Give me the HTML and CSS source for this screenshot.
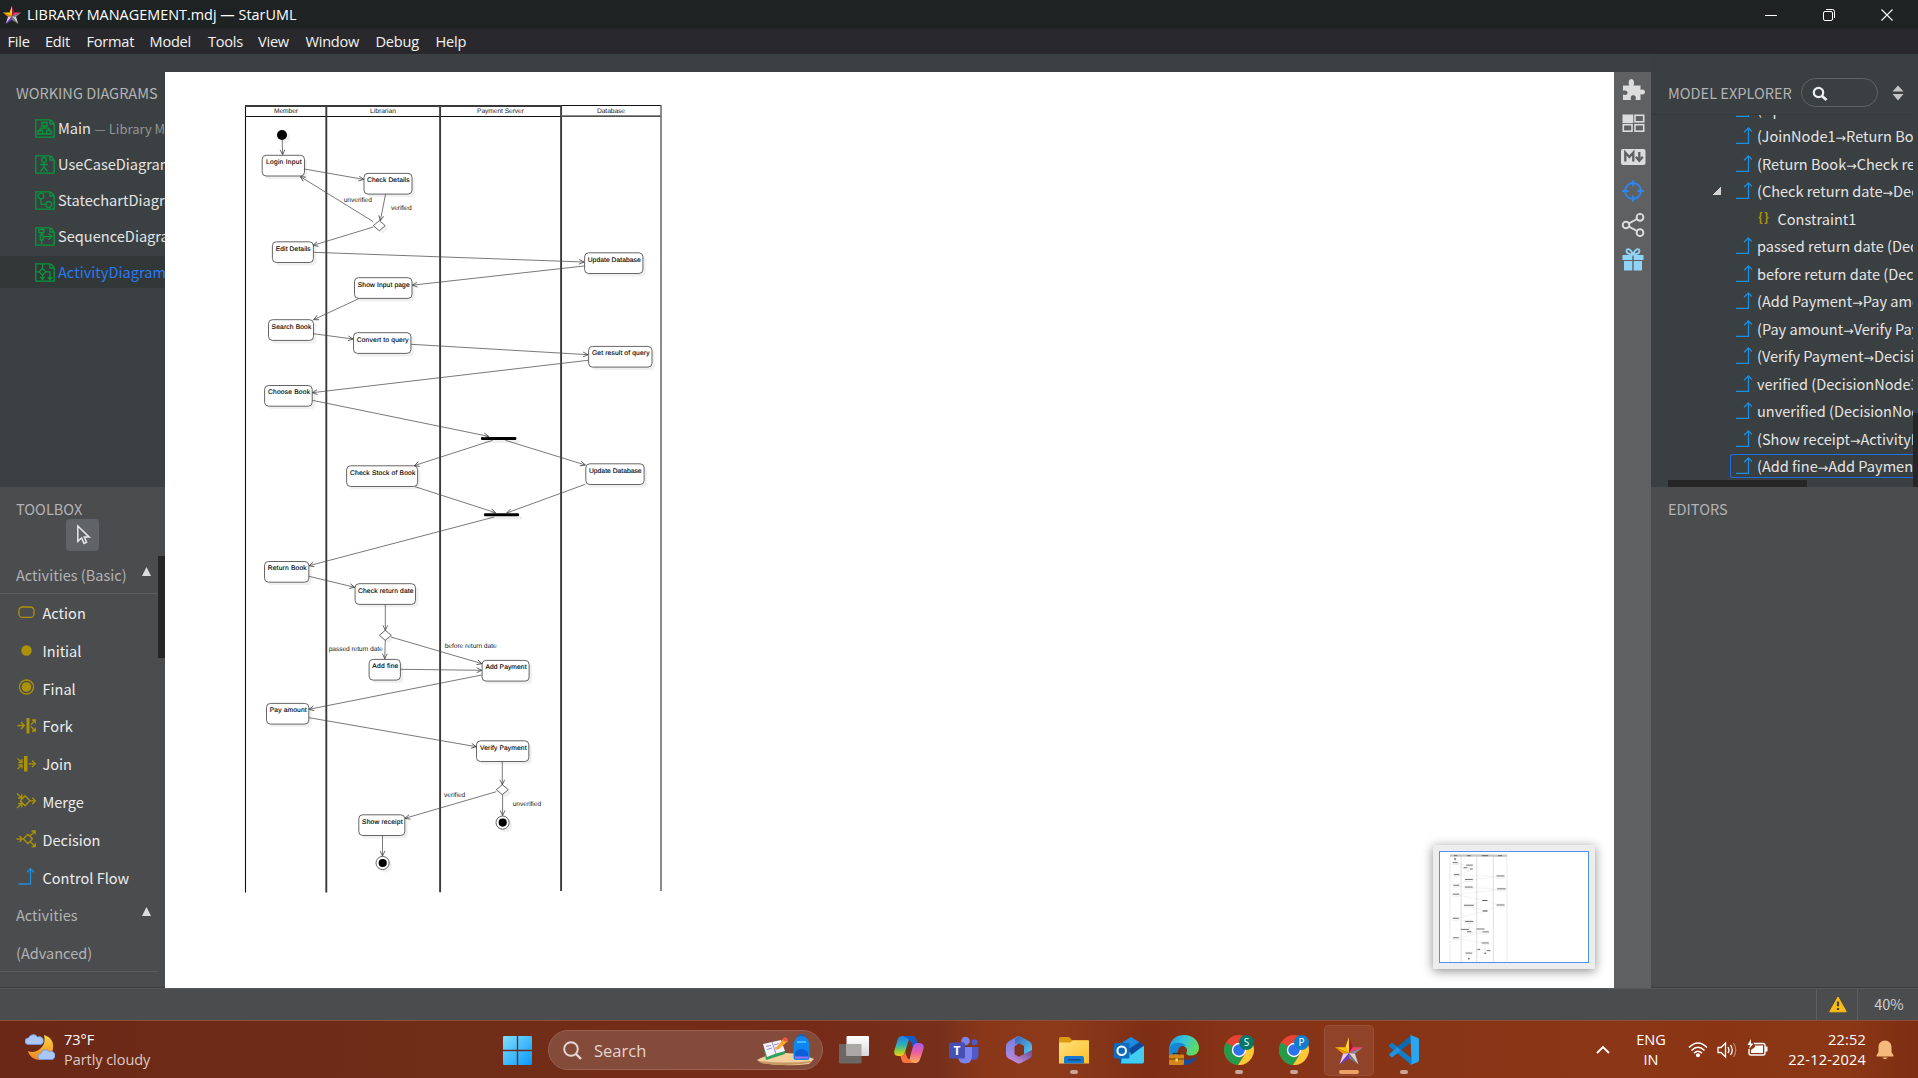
FILE: index.html
```html
<!DOCTYPE html>
<html lang="en">
<head>
<meta charset="utf-8">
<title>LIBRARY MANAGEMENT.mdj — StarUML</title>
<link rel="stylesheet" href="styles.css">
</head>
<body>
<svg class="defs" width="0" height="0" aria-hidden="true">
  <defs>
    <linearGradient id="gWin" x1="0" y1="0" x2="1" y2="1"><stop offset="0" stop-color="#7fe0ff"/><stop offset="1" stop-color="#0a97f8"/></linearGradient>
    <linearGradient id="gFolder" x1="0" y1="0" x2="1" y2="1"><stop offset="0" stop-color="#ffe07c"/><stop offset="1" stop-color="#fbc02c"/></linearGradient>
    <linearGradient id="gCopA" x1="0" y1="0" x2="0" y2="1"><stop offset="0" stop-color="#1d7fe8"/><stop offset=".45" stop-color="#2fb0b8"/><stop offset=".75" stop-color="#8fcf3c"/><stop offset="1" stop-color="#ffc814"/></linearGradient>
    <linearGradient id="gCopB" x1="0" y1="0" x2="0" y2="1"><stop offset="0" stop-color="#a65bf0"/><stop offset=".5" stop-color="#f0609a"/><stop offset="1" stop-color="#ffb054"/></linearGradient>
    <linearGradient id="gEdge" x1="0" y1="0" x2="1" y2=".4"><stop offset="0" stop-color="#1c93dc"/><stop offset=".5" stop-color="#35c4dc"/><stop offset="1" stop-color="#62dc58"/></linearGradient>
    <linearGradient id="gMoon" x1="0" y1="0" x2="0" y2="1"><stop offset="0" stop-color="#fad648"/><stop offset="1" stop-color="#f1841f"/></linearGradient>
    <linearGradient id="gTask" x1="0" y1="0" x2="0" y2="1"><stop offset="0" stop-color="#fff"/><stop offset="1" stop-color="#d8d8d8"/></linearGradient>
    <linearGradient id="gHexL" x1="0" y1="0" x2="0" y2="1"><stop offset="0" stop-color="#6f7fe0"/><stop offset="1" stop-color="#b58be6"/></linearGradient>
    <linearGradient id="gHexR" x1="0" y1="0" x2="1" y2="1"><stop offset="0" stop-color="#3a62b8"/><stop offset="1" stop-color="#55d0f0"/></linearGradient>
    <linearGradient id="gHexB" x1="0" y1="1" x2="1" y2="0"><stop offset="0" stop-color="#d79cf0"/><stop offset="1" stop-color="#6a4b8e"/></linearGradient>
    <marker id="arrow" viewBox="0 0 6 6" refX="5.6" refY="3" markerWidth="6" markerHeight="6" markerUnits="userSpaceOnUse" orient="auto"><path d="M0.6 .6L5.6 3L.6 5.4" fill="none" stroke="#444" stroke-width=".8"/></marker>
    <symbol id="star" viewBox="0 0 30 30">
      <path d="M15 1L11.3 11.3L15 17Z" fill="#ffd21f"/><path d="M15 1L18.7 11.3L15 17Z" fill="#a8123e"/>
      <path d="M11.3 11.3H1L15 17Z" fill="#ffc60e"/><path d="M1 11.3L9 17.8L15 17Z" fill="#e89a00"/>
      <path d="M18.7 11.3H29L15 17Z" fill="#ee4070"/><path d="M29 11.3L21 17.8L15 17Z" fill="#8b8b8f"/>
      <path d="M9 17.8L5.6 28.5L15 17Z" fill="#e6c8f4"/><path d="M5.6 28.5L15 22.5V17Z" fill="#6d3bd0"/>
      <path d="M15 17V22.5L24.4 28.5Z" fill="#777"/><path d="M15 17L21 17.8L24.4 28.5Z" fill="#d6d6da"/>
    </symbol>
    <symbol id="page" viewBox="0 0 20 19"><path d="M15 .8H.8V18.2H19.2V5M15 .8V5H19.2M15.8 .8L19.2 4.6" fill="none" stroke="#07983c" stroke-width="1.3"/></symbol>
    <symbol id="flow" viewBox="0 0 16 17"><path d="M0 16.3H12.5V1.5M8 5.2L12.4 .9L16 4.6" fill="none" stroke="#1c8fe0" stroke-width="1.3"/></symbol>
    <symbol id="tri" viewBox="0 0 8 8"><path d="M4 0L8 8H0Z" fill="#dcdcdc"/></symbol>
    <symbol id="chrome" viewBox="0 0 30 30">
      <circle cx="15" cy="15" r="15" fill="#e84335"/>
      <path d="M2 7.5A15 15 0 0 0 14 30L21 18.5L15 15Z" fill="#259a4a"/>
      <path d="M28 7.8H15L21.5 18.5L14 30A15 15 0 0 0 28 7.8Z" fill="#fcc934"/>
      <circle cx="15" cy="15" r="7.2" fill="#fff"/><circle cx="15" cy="15" r="5.8" fill="#2c72ea"/>
    </symbol>
  </defs>
</svg>

<header class="titlebar">
  <svg class="app-icon" width="20" height="20"><use href="#star"/></svg>
  <span class="title">LIBRARY MANAGEMENT.mdj — StarUML</span>
  <div class="win-controls">
    <svg width="12" height="12"><path d="M0 6.5H12" stroke="#fff"/></svg>
    <svg width="12" height="12" fill="none" stroke="#fff"><rect x=".5" y="2.5" width="9" height="9" rx="1.5"/><path d="M3 .5H9.5A2 2 0 0 1 11.5 2.5V9"/></svg>
    <svg width="12" height="12"><path d="M.5 .5L11.5 11.5M11.5 .5L.5 11.5" stroke="#fff" stroke-width="1.1"/></svg>
  </div>
</header>
<nav class="menubar"><span>File</span><span>Edit</span><span>Format</span><span>Model</span><span>Tools</span><span>View</span><span>Window</span><span>Debug</span><span>Help</span></nav>

<main class="workspace">
  <aside class="left">
    <section class="working">
      <h2>WORKING DIAGRAMS</h2>
      <ul>
        <li><svg width="20" height="19" fill="none" stroke="#07983c" stroke-width="1.3"><use href="#page"/><path d="M7 3.5H12V7H7ZM3 11.5H7.5V15H3ZM11.5 11.5H16V15H11.5ZM9.5 7V9.2M5.2 11.5V9.2H13.8V11.5M2 15H17"/></svg><span>Main <small>— Library Management</small></span></li>
        <li><svg width="20" height="19" fill="none" stroke="#07983c" stroke-width="1.3"><use href="#page"/><circle cx="9" cy="5" r="2.4"/><path d="M9 7.5V12M5 9.5H13M9 12L5.5 16.5M9 12L12.5 16.5"/></svg><span>UseCaseDiagram1</span></li>
        <li><svg width="20" height="19" fill="none" stroke="#07983c" stroke-width="1.3"><use href="#page"/><circle cx="6" cy="5" r="2.9"/><circle cx="13.7" cy="13.4" r="2.9"/><path d="M6 8V13.4H10.6"/></svg><span>StatechartDiagram1</span></li>
        <li><svg width="20" height="19" fill="none" stroke="#07983c" stroke-width="1.3"><use href="#page"/><path d="M4 2.6H9V5.6H4ZM6.5 5.6V8M5.2 8H8V13H5.2ZM6.6 13V17M8 9.6H17M13.5 6.4L17 9.6L13.5 12.8"/></svg><span>SequenceDiagram1</span></li>
        <li class="active"><svg width="20" height="19" fill="none" stroke="#07983c" stroke-width="1.3"><use href="#page"/><path d="M7.5 1V5.5M7.5 5.5L11 8.8L7.5 12.2L4 8.8ZM1 8.8H4M11 8.8H15V16M7.5 12.2V16.5M5.3 14L7.5 16.6L9.7 14M12.8 14L15 16.6L17.2 14"/></svg><span>ActivityDiagram1</span></li>
      </ul>
    </section>
    <section class="toolbox">
      <h2>TOOLBOX</h2>
      <button class="pointer" aria-label="Select"><svg width="16" height="22" viewBox="0 0 16 22"><path d="M1.8 2V17.3L5.6 14L8 19.4L10.6 18.2L8.3 13.1H13.2Z" fill="none" stroke="#e6e6e6" stroke-width="1.5"/></svg></button>
      <div class="tool-scroll">
        <div class="tools">
          <div class="group"><span>Activities (Basic)</span><svg width="9" height="9"><use href="#tri"/></svg></div>
          <ul>
            <li><svg viewBox="0 0 20 20"><rect x="3" y="4" width="15" height="10.4" rx="3.5"/></svg>Action</li>
            <li><svg viewBox="0 0 20 20"><circle cx="10.5" cy="9.5" r="5.2" class="fill"/></svg>Initial</li>
            <li><svg viewBox="0 0 20 20"><circle cx="10.5" cy="9" r="7"/><circle cx="10.5" cy="9" r="4.8" class="fill"/></svg>Final</li>
            <li><svg viewBox="0 0 20 20"><path class="fill" d="M10.5 2H13.5V17.5H10.5Z"/><path d="M1.5 9.5H8M5 6L8.3 9.5L5 13M15 8.6L19 4M16 4H19.3V7.5M15 10.4L19 15M16 15H19.3V11.5"/></svg>Fork</li>
            <li><svg viewBox="0 0 20 20"><path class="fill" d="M8 2H11.5V17.5H8Z"/><path d="M12.5 9.8H19.5M16 6.5L19.3 9.8L16 13M1.5 4.5L6 8.5M2.5 8.5H6V5M1.5 15L6 11M2.5 11H6V14.5"/></svg>Join</li>
            <li><svg viewBox="0 0 20 20"><path d="M1 1.5L5.8 6M2.2 6H5.8V2.3M1 16L5.8 11.5M2.2 11.5H5.8V15.5M9 3.8L14 8.8L9 13.8L4.3 8.8ZM14 8.8H19.5M16.3 5.6L19.4 8.8L16.3 12"/></svg>Merge</li>
            <li><svg viewBox="0 0 20 20"><path d="M.5 9H6M3.5 6L6.3 9L3.5 12M12 4.2L16.5 9L12 13.5L7.3 9ZM14 6L19 1M15.5 1H19.2V4.6M14 11.5L19 16.5M15.5 16.7H19.2V13"/></svg>Decision</li>
            <li><svg viewBox="0 0 20 20"><path class="blue" d="M2.5 17H14.5V2M11 5.2L14.5 1.6L18 5.2"/></svg>Control Flow</li>
          </ul>
          <div class="group two"><span>Activities<br>(Advanced)</span><svg width="9" height="9"><use href="#tri"/></svg></div>
        </div>
      </div>
    </section>
  </aside>

  <section class="canvas">
    <svg class="diagram" width="1449" height="916" viewBox="165 72 1449 916">
      <g id="shapes">
        <g class="lanes">
          <path class="edge-line" d="M245.5 892.5V105.5M245 116.5H661M245 105.5H661"/>
          <path class="lane" d="M326.3 105V892.5M440.1 105V892.3M561.1 105V891M245 106H561"/>
          <path class="lane last" d="M661 105V891M561 116H661"/>
        </g>
        <g class="shadow">
          <circle cx="285" cy="138" r="5"/><rect x="265" y="158.3" width="42" height="20.7" rx="4"/><rect x="367" y="176.4" width="48" height="20.7" rx="4"/><rect x="275.4" y="244.8" width="41" height="20.7" rx="4"/><rect x="587.4" y="255.8" width="58.3" height="20.7" rx="4"/><rect x="357.3" y="280.7" width="57.5" height="20.7" rx="4"/><rect x="271.3" y="322.7" width="45" height="20.7" rx="4"/><rect x="356.3" y="335.7" width="57.4" height="20.7" rx="4"/><rect x="591.4" y="349.3" width="63.4" height="20.7" rx="4"/><rect x="267.4" y="388.4" width="47.6" height="20.7" rx="4"/><rect x="349.4" y="468.6" width="71" height="20.7" rx="4"/><rect x="588.7" y="466.7" width="58.3" height="20.7" rx="4"/><rect x="267.4" y="564.4" width="44.3" height="20.7" rx="4"/><rect x="358" y="586.6" width="60.4" height="20.7" rx="4"/><rect x="372" y="662.3" width="31.3" height="20.7" rx="4"/><rect x="485" y="663.3" width="47" height="20.7" rx="4"/><rect x="269.4" y="706.3" width="42.3" height="20.7" rx="4"/><rect x="479.4" y="743.7" width="52.3" height="20.7" rx="4"/><rect x="361.7" y="817.7" width="46" height="20.7" rx="4"/>
          <circle cx="505.6" cy="825.7" r="6.5"/><circle cx="385.6" cy="866" r="6.5"/>
          <path d="M376.3 228.7L382.3 223.7L388.3 228.7L382.3 233.7ZM382.3 638.3L388.3 633.3L394.3 638.3L388.3 643.3ZM499.3 792.7L505.3 787.7L511.3 792.7L505.3 797.7ZM484 440H519.5V443H484ZM487 516.5H522V519.5H487Z"/>
        </g>
        <g class="nodes">
          <rect x="262.2" y="155.3" width="42.3" height="20.7" rx="4"/><rect x="364" y="173.4" width="48" height="20.7" rx="4"/><rect x="272.4" y="241.8" width="41" height="20.7" rx="4"/><rect x="584.6" y="252.8" width="58.3" height="20.7" rx="4"/><rect x="354.5" y="277.7" width="57.5" height="20.7" rx="4"/><rect x="268.5" y="319.7" width="45" height="20.7" rx="4"/><rect x="353.5" y="332.7" width="57.4" height="20.7" rx="4"/><rect x="588.6" y="346.4" width="63.4" height="20.7" rx="4"/><rect x="264.6" y="385.5" width="47.6" height="20.7" rx="4"/><rect x="346.6" y="465.8" width="71" height="20.7" rx="4"/><rect x="585.8" y="463.8" width="58.3" height="20.7" rx="4"/><rect x="264.5" y="561.5" width="44.3" height="20.7" rx="4"/><rect x="355.1" y="583.7" width="60.4" height="20.7" rx="4"/><rect x="369.1" y="659.4" width="31.3" height="20.7" rx="4"/><rect x="482.1" y="660.4" width="47" height="20.7" rx="4"/><rect x="266.5" y="703.4" width="42.3" height="20.7" rx="4"/><rect x="476.5" y="740.8" width="52.3" height="20.7" rx="4"/><rect x="358.8" y="814.8" width="46" height="20.7" rx="4"/>
          <path d="M373.3 225.7L379.3 220.7L385.3 225.7L379.3 230.7ZM379.3 635.3L385.3 630.3L391.3 635.3L385.3 640.3ZM496.3 789.7L502.3 784.7L508.3 789.7L502.3 794.7Z"/>
          <circle cx="502.6" cy="822.6" r="6.6"/><circle cx="382.6" cy="863" r="6.6"/>
        </g>
        <g class="solid">
          <circle cx="282" cy="135" r="5"/><circle cx="502.7" cy="822.6" r="4.1"/><circle cx="382.7" cy="863" r="4.1"/>
          <rect x="481" y="437" width="35.3" height="3" rx="1"/><rect x="484" y="513.3" width="35" height="3" rx="1"/>
        </g>
        <g class="flows">
          <path d="M282.2 140L282.6 154.7"/><path d="M304.3 169L363.7 179.4"/><path d="M373.3 221.7L300.3 176.6"/><path d="M385.6 194L380.3 220.7"/><path d="M373.3 227L313 245.4"/><path d="M313.3 252.3L584 262"/><path d="M584 266L412.3 285.2"/><path d="M358.7 298.7L313.6 319.7"/><path d="M313.3 333.7L353 339"/><path d="M411 344.3L588 354.7"/><path d="M588 360.3L312.3 392.7"/><path d="M312.3 400.3L488.7 436.4"/><path d="M492.7 440.3L414.3 465.6"/><path d="M505.3 440.3L585.3 465"/><path d="M415 486.7L495.6 512.7"/><path d="M585.3 484.3L506.7 513"/><path d="M494.3 517L309 565.7"/><path d="M309 576.3L354.7 587.3"/><path d="M385.3 604.7V630.3"/><path d="M385.3 640L384.7 658.7"/><path d="M391 637L482 663.7"/><path d="M400.3 669.3L481.7 670.3"/><path d="M481.7 675L309 709.3"/><path d="M309 717.7L476.3 746.7"/><path d="M502.3 761.7V784.7"/><path d="M502.6 794.7V815.5"/><path d="M496.3 791.7L405 818.3"/><path d="M382.5 835.7V856"/>
        </g>
      </g>
      <g class="labels">
        <text x="274" y="112.9" textLength="24">Member</text><text x="370" y="112.9" textLength="26">Librarian</text><text x="477" y="112.9" textLength="47">Payment Server</text><text x="597" y="112.9" textLength="28">Database</text>
        <text x="343.7" y="201.7" textLength="28.3">unverified</text><text x="391" y="209.7" textLength="20.7">verified</text><text x="328.7" y="650.9" textLength="54">passed return date</text><text x="444.7" y="647.9" textLength="52">before return date</text><text x="444" y="796.7" textLength="21.3">verified</text><text x="512.7" y="805.7" textLength="28.5">unverified</text>
      </g>
      <g class="labels name">
        <text x="266" y="163.9" textLength="35.5">Login Input</text><text x="367" y="182" textLength="42.5">Check Details</text><text x="275.7" y="250.9" textLength="35">Edit Details</text><text x="587.7" y="261.9" textLength="53">Update Database</text><text x="357.7" y="287" textLength="52">Show Input page</text><text x="271.6" y="329" textLength="39.7">Search Book</text><text x="356.7" y="341.9" textLength="52">Convert to query</text><text x="592" y="354.9" textLength="57.5">Get result of query</text><text x="268" y="394" textLength="42">Choose Book</text><text x="350" y="475" textLength="65.3">Check Stock of Book</text><text x="589" y="473" textLength="52.5">Update Database</text><text x="267.7" y="570" textLength="39">Return Book</text><text x="358" y="593" textLength="55.5">Check return date</text><text x="372.3" y="668" textLength="26">Add fine</text><text x="485.5" y="669" textLength="41">Add Payment</text><text x="269.7" y="712" textLength="37">Pay amount</text><text x="480" y="750" textLength="46.5">Verify Payment</text><text x="362" y="824" textLength="40.5">Show receipt</text>
      </g>
    </svg>
    <div class="minimap">
      <svg width="150" height="112" viewBox="0 0 150 112">
        <g transform="translate(-22.6 -10.5) scale(.137)">
          <use href="#shapes" opacity=".6"/>
          <path d="M245 111H661" stroke="#c4c4c4" stroke-width="13"/>
          <path d="M274 111H298M370 111H396M477 111H524M597 111H625M344 199H372M391 208H412M325 649H383M440 646H497M444 795H465M513 804H541M266 162H302M365 180H411M274 249H313M586 259H642M355 285H411M270 327H311M355 340H410M590 353H651M266 392H311M348 473H417M587 471H643M266 568H308M356 591H415M370 666H400M484 667H528M268 710H308M478 748H528M360 822H404M276 135H288M481 438H519M484 514H519M497 823H509M377 863H389" stroke="#444" stroke-width="5.500"/>
        </g>
        <rect x=".5" y=".5" width="149" height="111" fill="none" stroke="#4b93f5"/>
      </svg>
    </div>
  </section>

  <nav class="strip">
    <svg width="24" height="24" viewBox="0 0 24 24" fill="#dcdcdc"><path d="M2 8.5H8.2C7 5.5 8 2.2 10.2 2C12.7 2 13.7 5 12.6 8.5H19.5V13C22 11.8 24 13 24 15C24 17 22 18.3 19.5 17V23H14.5C15.5 19.8 14.3 18.3 12.3 18.3S9 20 10.2 23H2V17.5C5 18.5 6.5 17.5 6.5 15.7S5 12.7 2 13.8Z"/></svg>
    <svg width="24" height="24" viewBox="0 0 24 24" fill="none" stroke="#dcdcdc" stroke-width="1.6"><rect x="2.3" y="4.3" width="9.2" height="7" fill="#dcdcdc"/><rect x="14" y="4.3" width="8.7" height="6.5"/><rect x="2.3" y="13.7" width="8.7" height="6.5"/><rect x="14" y="13.7" width="8.7" height="6.5"/></svg>
    <svg width="26" height="24" viewBox="0 0 26 24"><rect x="1" y="4" width="24.5" height="16" rx="2" fill="#dcdcdc"/><path d="M5.3 16.5V7.5L9.3 12L13.3 7.5V16.5M19.3 7V15M15.8 11.7L19.3 15.7L22.8 11.7" fill="none" stroke="#5f6062" stroke-width="2.3"/></svg>
    <svg width="24" height="24" viewBox="0 0 24 24" fill="none" stroke="#2c86f5" stroke-width="1.9"><circle cx="12" cy="12" r="8"/><path d="M12 1V7.5M12 16.5V23M1 12H7.5M16.5 12H23"/></svg>
    <svg width="24" height="24" viewBox="0 0 24 24" fill="none" stroke="#dcdcdc" stroke-width="1.9"><circle cx="5" cy="12" r="3.3"/><circle cx="19" cy="4.3" r="3.4"/><circle cx="19" cy="19.7" r="3.4"/><path d="M8 10.3L16 6M8 13.7L16 18"/></svg>
    <svg width="24" height="24" viewBox="0 0 24 24"><g fill="#8fd4f7"><path d="M1.5 8H11.3V13H1.5ZM12.7 8H22.5V13H12.7ZM3 14H11.3V23.5H3ZM12.7 14H21V23.5H12.7Z"/></g><path d="M12 7.5C9 7.5 5.5 6.5 5.5 4S9 .5 12 7.5C15 .5 18.5 1.5 18.5 4S15 7.5 12 7.5Z" fill="none" stroke="#8fd4f7" stroke-width="1.8"/></svg>
  </nav>

  <aside class="right">
    <section class="explorer">
      <div class="explorer-head">
        <h2>MODEL EXPLORER</h2>
        <div class="find"><svg width="16" height="16" viewBox="0 0 16 16" fill="none" stroke="#eee"><circle cx="6.5" cy="6.5" r="4.7" stroke-width="2.2"/><path d="M10 10L14.5 14" stroke-width="2.8"/></svg></div>
        <svg class="sort" width="12" height="16"><path d="M6 .5L11.5 6.5H.5ZM6 15.5L11.5 9H.5Z" fill="#c4c4c4"/></svg>
      </div>
      <div class="tree">
        <ul>
          <li><svg><use href="#flow"/></svg><span>(Update Database<i>→</i>JoinNode1)</span></li>
          <li><svg><use href="#flow"/></svg><span>(JoinNode1<i>→</i>Return Book)</span></li>
          <li><svg><use href="#flow"/></svg><span>(Return Book<i>→</i>Check return date)</span></li>
          <li class="open"><svg><use href="#flow"/></svg><span>(Check return date<i>→</i>DecisionNode2)</span></li>
          <li class="child"><b>{}</b>Constraint1</li>
          <li><svg><use href="#flow"/></svg><span>passed return date (DecisionNode2)</span></li>
          <li><svg><use href="#flow"/></svg><span>before return date (DecisionNode2)</span></li>
          <li><svg><use href="#flow"/></svg><span>(Add Payment<i>→</i>Pay amount)</span></li>
          <li><svg><use href="#flow"/></svg><span>(Pay amount<i>→</i>Verify Payment)</span></li>
          <li><svg><use href="#flow"/></svg><span>(Verify Payment<i>→</i>DecisionNode3)</span></li>
          <li><svg><use href="#flow"/></svg><span>verified (DecisionNode3)</span></li>
          <li><svg><use href="#flow"/></svg><span>unverified (DecisionNode3)</span></li>
          <li><svg><use href="#flow"/></svg><span>(Show receipt<i>→</i>ActivityFinalNode2)</span></li>
          <li class="selected"><svg><use href="#flow"/></svg><span>(Add fine<i>→</i>Add Payment)</span></li>
        </ul>
      </div>
    </section>
    <section class="editors"><h2>EDITORS</h2></section>
  </aside>
</main>

<footer class="status">
  <div class="warn"><svg width="18" height="17" viewBox="0 0 18 17"><path d="M9 1L17.3 15.8H.7Z" fill="#fdbc12" stroke="#fdbc12" stroke-linejoin="round"/><path d="M9 5.5V10.3M9 11.9V14" stroke="#444" stroke-width="2.2"/></svg></div>
  <div class="zoom">40%</div>
</footer>

<div class="taskbar">
  <div class="weather">
    <svg width="30" height="28" viewBox="0 0 30 28"><path d="M19 2C26 4 29 9 28 16C27 23 21 27 15 27C9 27 4 23 3 18C7 20 12 19 16 15C20 11 20 7 19 2Z" fill="url(#gMoon)"/><path d="M3 11.5A3 3 0 0 1 3.5 5A5 5 0 0 1 12.5 4A4 4 0 0 1 16 11.5ZM16 26.5A3 3 0 0 1 16 20.5A4.5 4.5 0 0 1 24 18.5A4 4 0 0 1 27.5 26.5Z" fill="#a9c8f8" stroke="#6d95df" stroke-width=".8"/></svg>
    <div><p>73°F</p><p class="dim">Partly cloudy</p></div>
  </div>
  <svg class="start" width="29" height="29" viewBox="0 0 29 29"><path d="M0 1Q0 0 1 0H13.8V13.8H0ZM15.2 0H28Q29 0 29 1V13.8H15.2ZM0 15.2H13.8V29H1Q0 29 0 28ZM15.2 15.2H29V28Q29 29 28 29H15.2Z" fill="url(#gWin)"/></svg>
  <div class="search">
    <svg width="19" height="19" viewBox="0 0 19 19" fill="none" stroke="#e6d9d5"><circle cx="8" cy="8" r="6.8" stroke-width="1.9"/><path d="M13 13L18 18" stroke-width="2.4"/></svg>
    <span>Search</span>
    <svg class="art" width="58" height="32" viewBox="0 0 58 32"><path d="M0 26Q13 19 29 19T57 25L52 30Q28 33 5 29Z" fill="#f3cf9d"/><path d="M4 29Q28 33 52 29L54 27Q28 30 2 27Z" fill="#c49a62"/><path d="M6 11L9 26L28 20L27 15L10 22Z" fill="#2fa25c"/><path d="M6 10L15 8L24 6L28 17L19 19.500L10 23Z" fill="#f4f2fb"/><path d="M15 8L19 20M9 12.500L14 11.500M10 15.500L15 14M17 11L22 9.500M18 14L23 12.500" stroke="#9b8fd0" fill="none"/><path d="M19 14L27 4L31 7L22 15L18 16Z" fill="#ffa928"/><path d="M25 5.5L28 3L31 5L29 8Z" fill="#f05542"/><path d="M41 3Q44 -1 48 3" fill="none" stroke="#1463c0" stroke-width="2"/><path d="M36.500 12Q37 2 44.500 2T52.500 12V24Q52.500 26 50 26H39Q36.500 26 36.500 24Z" fill="#0d86ef"/><path d="M38 18Q44 12 51 18V24H38Z" fill="#0b5ed8"/><path d="M38 22.5H51V24.5H38Z" fill="#a66bf2"/><path d="M40 8H49" stroke="#56c9ff" stroke-width="1.5"/></svg>
  </div>
  <div class="apps">
    <div class="app"><svg viewBox="0 0 30 30"><rect x="0" y="9" width="22.5" height="19.5" rx="1" fill="#6c6764"/><rect x="7.5" y="1" width="22.5" height="20" rx="1" fill="url(#gTask)"/><path d="M7.5 9H22.5V21H7.5Z" fill="#aaa7a5"/></svg></div>
    <div class="app"><svg viewBox="0 0 30 30"><path d="M18 1H9C5 1 4 3 3 7L.5 15C-.5 19 1 21 5 21H7C9.5 21 10.5 19 11.2 16.5L14.5 6C15.5 3 16.5 2.5 18 1Z" fill="url(#gCopA)"/><path d="M12 28H20.5C24.5 28 25.5 26 26.5 23L29.3 14.5C30.5 10.5 29 8 25 8H23C20.5 8 19.5 10 18.8 12L15.8 23C15 26 14 27 12 28Z" fill="url(#gCopB)"/><path d="M9 1H19C22 1 22.5 4 23.5 8C20.5 8 19.5 9.5 18.8 12L17.5 8C16.5 5 12 2 9 1Z" fill="#1759c6"/><path d="M21 28H11C8 28 7.5 25 6.5 21C9.5 21 10.5 19.5 11.2 17L12.5 21C13.5 24 16.5 26.5 21 28Z" fill="#f9733f"/></svg></div>
    <div class="app"><svg viewBox="0 0 30 30"><circle cx="16.5" cy="6" r="4.3" fill="#7b83eb"/><circle cx="25.5" cy="7.3" r="3" fill="#5059c9"/><path d="M20 12H29.5V20Q29.5 25 24.5 25L20 22Z" fill="#5059c9"/><path d="M9 12H23V21Q23 28.5 16 28.5T9 21Z" fill="#7b83eb"/><rect x="0" y="7.5" width="16" height="16" rx="1.5" fill="#4650b6"/><text x="8" y="20" class="glyph">T</text></svg></div>
    <div class="app"><svg viewBox="0 0 30 30"><path d="M14 1L4.500 6.500Q2 8 2 11V19Q2 22 4.500 23.300L11 26V12L20 4Z" fill="url(#gHexL)"/><path d="M11 9L11 4L14 1.700Q15.500 1 17 1.700L25.500 6.500Q28 8 28 11V17L20 20V11L15 8.500Z" fill="url(#gHexR)"/><path d="M28 15V19Q28 22 25.500 23.500L17 28Q15 29 13 28L4 23L11 19.500L15 21.500L20 19Z" fill="url(#gHexB)"/><path d="M15 8.500L20 11.300V18.500L15 21.500L10.500 18.800V11.300Z" fill="#81331a"/></svg></div>
    <div class="app run"><svg viewBox="0 0 30 30"><path d="M0 3.5Q0 2 1.5 2H10L13 5H28Q30 5 30 7V12H0Z" fill="#dc9a10"/><path d="M0 7.5H11L14 5.5H30V28.5H0Z" fill="url(#gFolder)"/><path d="M5 28.5V23Q5 21 7 21H23Q25 21 25 23V28.5Z" fill="#1577cd"/><path d="M9 24.8H21.5" stroke="#0b4d8c" stroke-width="1.5"/></svg></div>
    <div class="app"><svg viewBox="0 0 30 30"><path d="M4 10L17 2L30 10V26Q30 28.5 28 28.5H8Q5 28.5 5 26Z" fill="#0b58ab"/><path d="M9 7L17 2L25 7L15 14L8 13Z" fill="#1d8ade"/><path d="M8 20L30 11V26Q30 28.5 28 28.5H7Z" fill="#42cdf0"/><path d="M15 14L26 7.5L30 10.5L17 20Z" fill="#0d4a9a"/><rect x="0" y="8" width="15.5" height="15.5" rx="1.5" fill="#0f6cbd"/><circle cx="7.7" cy="15.7" r="4.3" fill="none" stroke="#fff" stroke-width="2"/></svg></div>
    <div class="app"><svg viewBox="0 0 30 30"><path d="M0 19C-1 6 6 0 15 0C25 0 30 7 30 13C30 18 26 20.5 22 20.5C18 20.5 17 19 17.5 17.5C19 15 17.5 11 13 11C7 11 6 16 8 22L4 24Z" fill="url(#gEdge)"/><path d="M1 12C4 7 13 6 17 11C12 9.5 8 13 9 19L2 21Q-1 18 1 12Z" fill="#1687d2"/><path d="M14 24C18 26 25 24 28.5 21C25 28 19 31 12 29.5Z" fill="#164e9d"/><rect x="0" y="19.5" width="15" height="10.5" rx="1" fill="#d3851a"/><path d="M0 24H15" stroke="#8b5410" stroke-width="1.5"/><path d="M4.5 19.5V18.3H10.5V19.5" fill="none" stroke="#39342d" stroke-width="1.3"/><rect x="6.5" y="23.5" width="2.3" height="3" fill="#ffdf60"/></svg></div>
    <div class="app run"><svg viewBox="0 0 30 30"><use href="#chrome"/><circle cx="22.5" cy="7.5" r="7.5" fill="#00796b"/><text x="22.5" y="11.2" class="badge">S</text></svg></div>
    <div class="app run"><svg viewBox="0 0 30 30"><use href="#chrome"/><circle cx="22.5" cy="7.5" r="7.5" fill="#0b7fcb"/><text x="22.5" y="11.2" class="badge">P</text></svg></div>
    <div class="app run current"><svg viewBox="0 0 30 30"><use href="#star"/></svg></div>
    <div class="app run"><svg viewBox="0 0 30 30"><path d="M0 10L3 7.5L22.5 23V30L0 11.5Z" fill="#0f7cc4"/><path d="M0 20L3 22.5L22.5 7V0L0 18.5Z" fill="#0b6bb0"/><path d="M0 20L3 22.5L12 15.5L8 12Z" fill="#1f93dc"/><path d="M21.5 0L29 3Q30 3.5 30 5V25Q30 26.5 29 27L21.5 30L22.5 28Z" fill="#2ba5f0"/></svg></div>
  </div>
  <div class="tray">
    <svg class="chev" width="14" height="9"><path d="M1 8L7 2L13 8" fill="none" stroke="#fff" stroke-width="1.9"/></svg>
    <div class="lang"><p>ENG</p><p>IN</p></div>
    <svg class="wifi" width="20" height="17" viewBox="0 0 20 17" fill="none" stroke="#fff" stroke-width="1.5"><path d="M1 6.5Q10 -2.5 19 6.5M3.5 9.5Q10 3 16.5 9.5M6 12.3Q10 8 14 12.3"/><circle cx="10" cy="14.3" r="1.3" fill="#fff"/></svg>
    <svg class="vol" width="20" height="18" viewBox="0 0 20 18" fill="none" stroke="#fff" stroke-width="1.3"><path d="M1 6.5H4L8.5 2V16L4 11.5H1ZM11 6Q13 9 11 12M13.5 4Q17 9 13.5 14"/><path d="M16.5 2Q21 9 16.5 16" opacity=".4"/></svg>
    <svg class="bat" width="21" height="18" viewBox="0 0 21 18"><path d="M7 4.5H16Q18 4.5 18 6.5V14Q18 16 16 16H4Q2 16 2 14V10" fill="none" stroke="#fff" stroke-width="1.4"/><path d="M8 6.5H16V14H4V11L8 8ZM18 7.5H20.5V12.5H18Z" fill="#fff"/><path d="M4 0L.5 6H3L2 10L6.5 4.5H4Z" fill="#fff"/></svg>
    <div class="clock"><p>22:52</p><p>22-12-2024</p></div>
    <svg class="bell" width="18" height="20" viewBox="0 0 18 20"><path d="M9 .5C5 .5 2.5 3.5 2.5 7V12L.5 15.5V16.5H17.5V15.5L15.5 12V7C15.5 3.5 13 .5 9 .5ZM6.2 17.5Q9 21 11.8 17.5Z" fill="#f5b97c"/></svg>
  </div>
</div>
</body>
</html>
```
FILE: styles.css
```css
* { box-sizing: border-box; }
body {
  margin: 0;
  width: 1918px;
  height: 1078px;
  overflow: hidden;
  display: flex;
  flex-direction: column;
  background: #3b4042;
  font-family: "Noto Sans CJK SC", "Open Sans", sans-serif;
  font-size: 14.55px;
  color: #e4e4e4;
}
h2, p, ul { margin: 0; padding: 0; font-size: inherit; font-weight: 400; }
ul { list-style: none; }
svg { display: block; flex: none; }
.defs { position: absolute; }

.titlebar, .menubar, .taskbar { font-family: "Open Sans", "Noto Sans", sans-serif; }
.titlebar { height: 29px; flex: none; display: flex; align-items: center; background: #1e2223; color: #fff; padding-left: 2px; }
.title { margin-left: 5px; font-size: 14.4px; letter-spacing: .02px; white-space: nowrap; }
.win-controls { margin-left: auto; display: flex; gap: 46px; padding-right: 25px; }
.menubar {
  height: 25px; flex: none; background: #29292d; color: #f2f2f2;
  display: grid; grid-template-columns: 37.5px 41.5px 63px 58.5px 50px 47.5px 70px 60px auto;
  padding-left: 7.5px; line-height: 25px; font-size: 14.6px; letter-spacing: -.25px;
}

.workspace { height: 934px; flex: none; display: grid; grid-template-columns: 165px 1449px 37px 267px; }
.workspace h2 { color: #b2b3b4; line-height: 20px; white-space: nowrap; }

.left { display: grid; grid-template-rows: 433px 501px; overflow: hidden; }
.working { padding-top: 29px; overflow: hidden; }
.working h2 { padding-left: 16px; }
.working ul { margin-top: 9px; display: flex; flex-direction: column; gap: 4px; }
.working li { height: 32px; display: flex; align-items: center; gap: 3px; padding-left: 35px; white-space: nowrap; font-size: 14.6px; }
.working li span { margin-top: -1px; }
.working small { font-size: 13px; color: #949697; }
.working .active { background: #323738; color: #2a7af3; }
.toolbox { background: #4b4c4e; padding-top: 12px; display: flex; flex-direction: column; border-bottom: 1px solid #3c3d3f; overflow: hidden; }
.toolbox h2 { padding-left: 16px; }
.pointer { margin: 0 0 0 66px; width: 33px; height: 32px; border: 0; border-radius: 4px; background: #616467; display: grid; place-items: center; padding: 0 0 0 2px; }
.tool-scroll { margin-top: 5px; flex: 1; background: linear-gradient(#262626, #262626) right top / 7px 102px no-repeat; }
.tools { width: 158px; line-height: 37.8px; }
.group { height: 38px; padding: 0 7px 0 16px; display: flex; justify-content: space-between; color: #b2b3b4; border-bottom: 1px solid #5c5d5f; }
.group svg { margin-top: 11px; }
.group.two { height: 76px; }
.tools li { height: 37.8px; display: flex; align-items: center; gap: 6.5px; padding-left: 16px; white-space: nowrap; color: #ececec; }
.tools li svg { width: 20px; height: 20px; fill: none; stroke: #ab9206; stroke-width: 1.3; }
.tools .fill { fill: #ab9206; stroke: none; }
.tools .blue { stroke: #1c8fe0; }

.canvas { margin-top: 18px; background: #fff; position: relative; overflow: hidden; }
.edge-line { fill: none; stroke: #111; stroke-width: 1.1; }
.lane { fill: none; stroke: #3a3a3a; stroke-width: 1.9; }
.lane.last { stroke: #666; stroke-width: 1.5; }
.shadow { fill: #f0f0f0; }
.nodes { fill: #fff; stroke: #555; stroke-width: .9; }
.solid { fill: #000; }
.flows { fill: none; stroke: #4c4c4c; stroke-width: .75; }
.flows path { marker-end: url(#arrow); }
.labels { font: 6.7px "Liberation Sans", Arial, sans-serif; fill: #222; text-rendering: geometricPrecision; }
.labels.name { stroke: #000; stroke-width: .12; fill: #000; }
.minimap { position: absolute; left: 1268px; top: 773px; width: 162px; height: 124px; padding: 6px; background: #ededed; box-shadow: 0 2px 10px rgba(0,0,0,.45); }
.minimap svg { background: #fff; }

.strip { margin-top: 18px; background: #5f6062; display: flex; flex-direction: column; align-items: center; gap: 10px; padding-top: 5px; }

.right { display: grid; grid-template-rows: 433px 501px; min-width: 0; }
.explorer { overflow: hidden; background: linear-gradient(#262626, #262626) 262px 359px / 5px 74px no-repeat, linear-gradient(#262626, #262626) 17px 426px / 139px 7px no-repeat, #3a3f41; }
.explorer-head { height: 60px; padding: 24px 0 7px 17px; display: flex; align-items: center; }
.explorer-head h2 { width: 133px; }
.find { width: 77px; height: 29px; border: 1px solid #5f6365; border-radius: 15px; padding: 7px 0 0 10px; }
.sort { margin-left: 13.5px; }
.tree { height: 366px; width: 262px; overflow: hidden; border-top: 1px solid #34393a; }
.tree ul { margin-top: -20.5px; }
.tree li { height: 27.5px; display: flex; align-items: center; gap: 5px; margin-left: 79px; padding-left: 6px; white-space: nowrap; overflow: hidden; }
.tree li svg { width: 16px; height: 17px; }
.tree i { display: inline-block; width: 10.5px; font: 12.5px/1 "DejaVu Sans", sans-serif; }
.tree .open { margin-left: 0; padding-left: 85px; background: linear-gradient(135deg, transparent 50%, #d4d4d4 50%) 62px 10px / 8px 8px no-repeat; }
.tree .child { padding-left: 28px; gap: 6.5px; }
.tree b { color: #ab9206; font-size: 13px; letter-spacing: 1px; width: 13px; margin-top: -4px; }
.tree .selected { height: 24px; margin-top: 1.5px; padding-left: 5px; border: 1px solid #1b6fe0; border-right: 0; border-radius: 3px 0 0 3px; }
.editors { background: #4b4c4e; padding: 12px 17px; border-bottom: 1px solid #3c3d3f; }

.status { height: 32px; flex: none; background: #4b4c4e; border-top: 1px solid #58595b; display: flex; justify-content: flex-end; color: #cfcfcf; }
.warn { width: 41px; border-left: 1px solid #5d5e60; display: grid; place-items: center; padding-left: 1px; }
.zoom { width: 61px; border-left: 1px solid #5d5e60; line-height: 29px; text-align: center; padding-left: 2px; }

.taskbar {
  height: 58px; flex: none; border-top: 1px solid #8a5038; display: flex; color: #fff; font-size: 14.5px;
  background: linear-gradient(90deg, #6b2816 0, #702d18 470px, #752b17 820px, #76301a 940px, #8a3719 985px, #8c3a1a 1060px, #7d2e15 1150px, #853216 1220px, #8b3616 1620px, #8a3413 1720px, #8b3716 1850px, #7c2d11 1918px);
}
.taskbar p { line-height: 20px; letter-spacing: -.05px; white-space: nowrap; }
.weather { width: 503px; padding: 9px 0 0 25px; display: flex; gap: 9px; }
.weather svg { margin-top: 3px; }
.dim { color: #dccac4; }
.start { margin-top: 15px; }
.search { margin: 9px 3.5px 0 16px; width: 275px; height: 40px; border: 1px solid #99604f; border-radius: 20px; background: #854b3a; display: flex; align-items: center; padding-left: 14px; font-size: 16.5px; color: #e3d4cf; }
.search span { margin-left: 12px; }
.art { margin: 0 7px 0 auto; }
.apps { display: grid; grid-template-columns: repeat(11, 55px); }
.app { display: flex; flex-direction: column; align-items: center; padding-top: 14px; }
.app > svg { width: 30px; height: 30px; }
.app.run::after { content: ""; width: 8px; height: 4px; margin-top: 5px; border-radius: 2px; background: #c9a498; }
.app.current { margin: 4px 2.5px 2px; padding-top: 10px; background: rgba(255,255,255,.08); border: 1px solid rgba(255,255,255,.08); border-radius: 5px; }
.app.current::after { width: 20px; background: #eda263; margin-top: 4px; }
.glyph { font: 700 12px "Open Sans", sans-serif; fill: #fff; text-anchor: middle; }
.badge { font: 10px "Open Sans", sans-serif; fill: #fff; text-anchor: middle; }
.tray { flex: 1; display: flex; align-items: flex-start; padding-left: 164.5px; }
.chev { margin-top: 24px; }
.lang { width: 60px; margin: 9px 0 0 11px; text-align: center; }
.wifi { margin: 20px 0 0 7px; }
.vol { margin: 20px 0 0 9px; }
.bat { margin: 18px 0 0 10px; }
.clock { margin: 9px 0 0 auto; text-align: right; }
.clock p { letter-spacing: .2px; }
.bell { margin: 19px 24px 0 10px; }
```
